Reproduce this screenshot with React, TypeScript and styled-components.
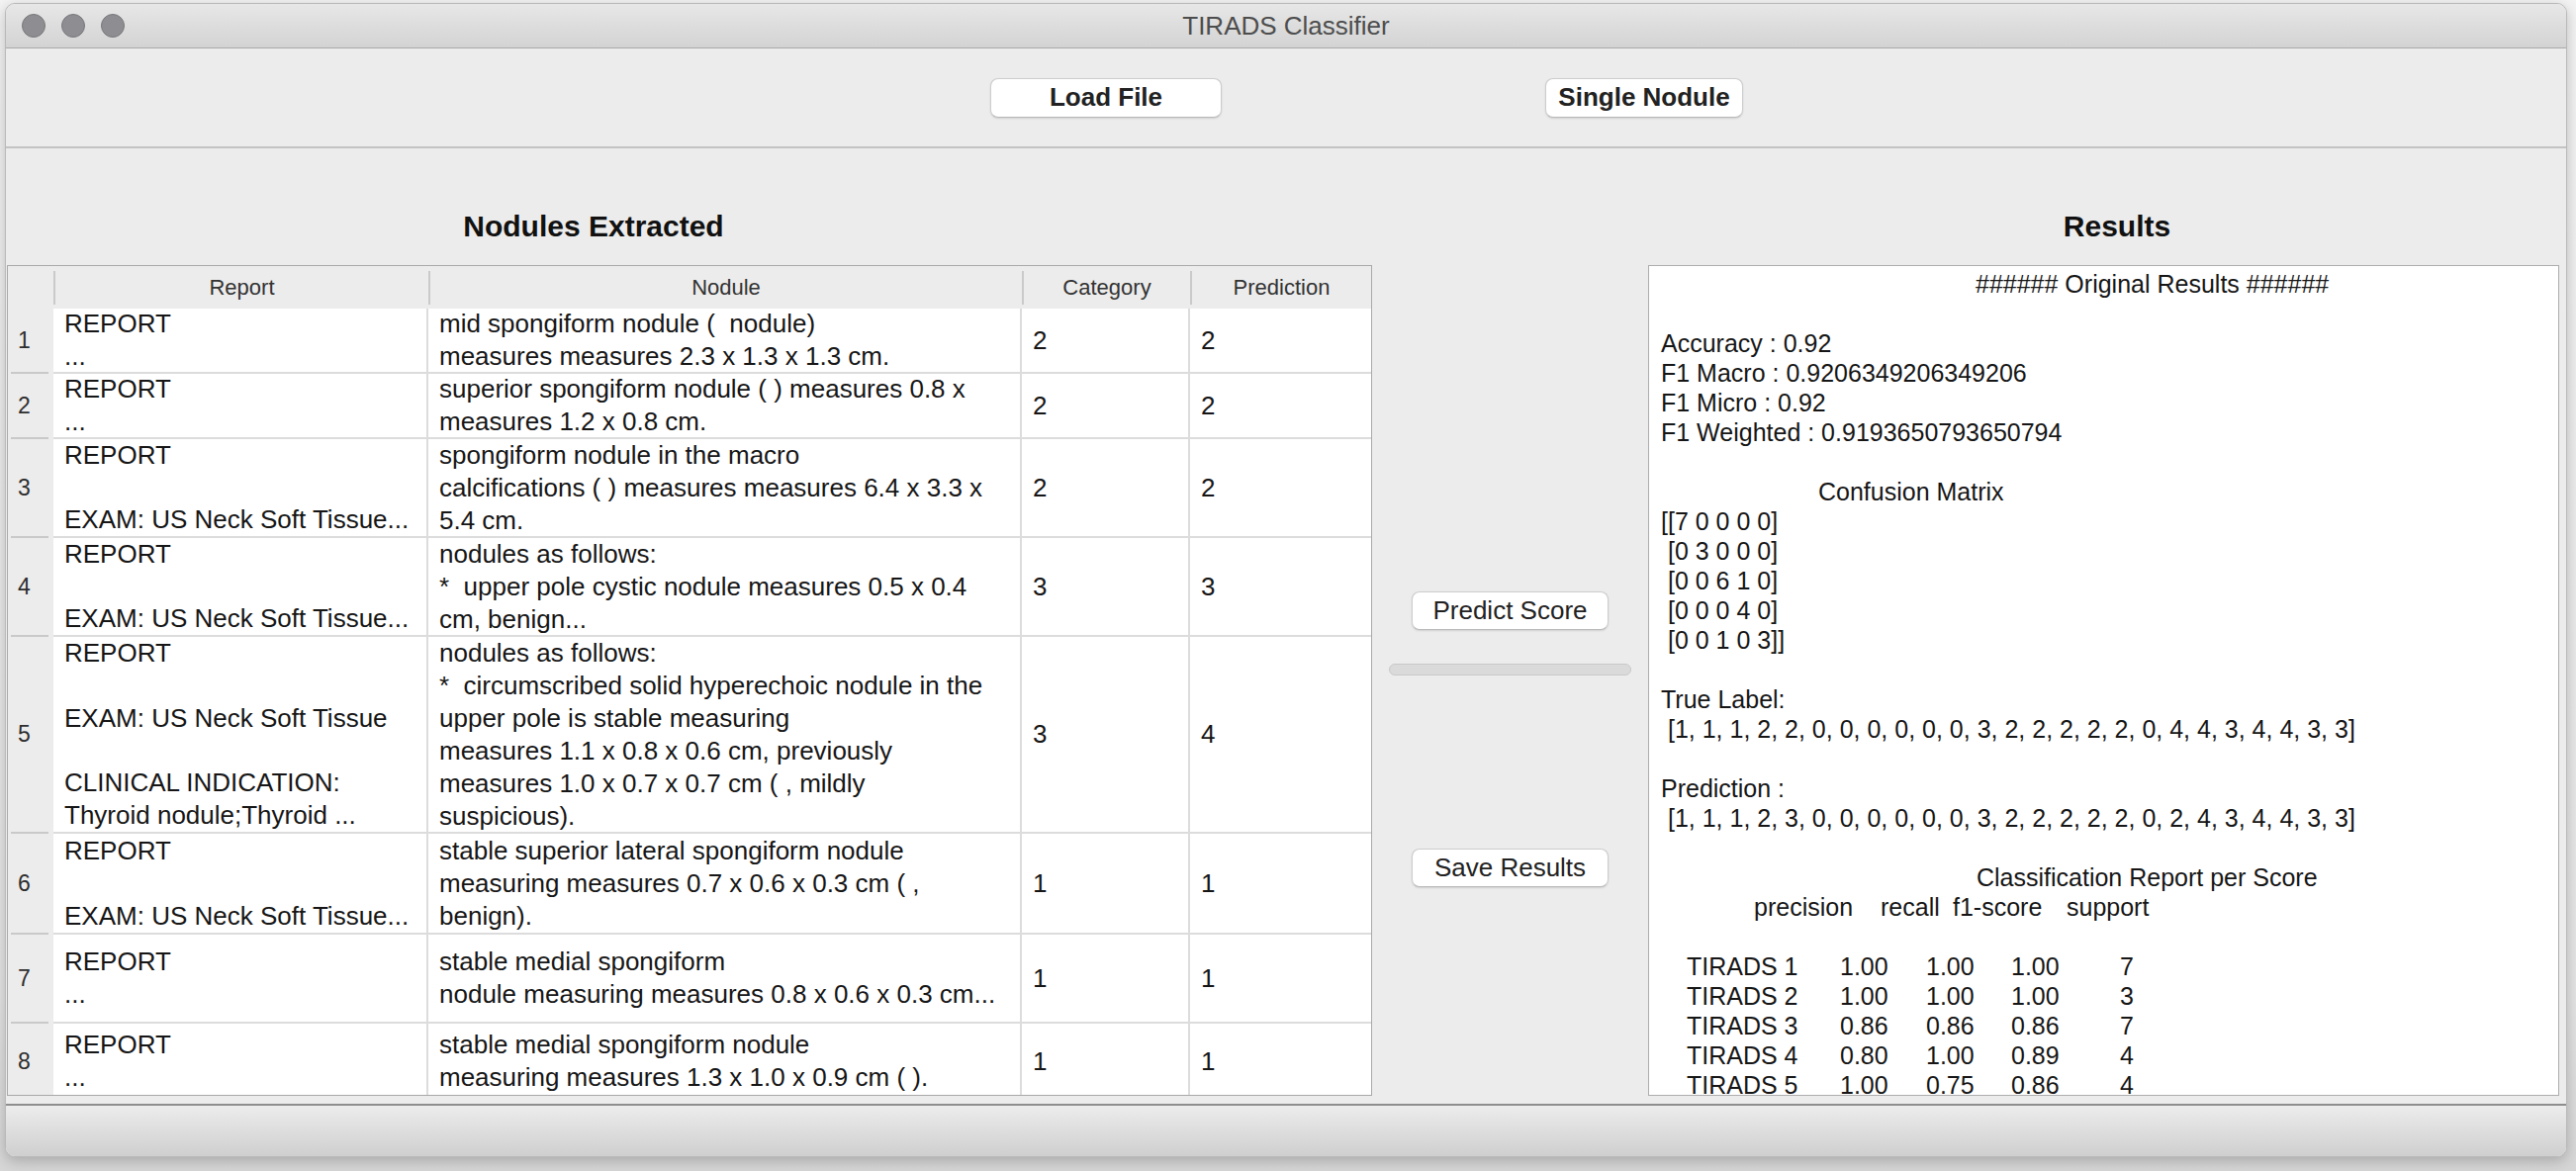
import styled, { createGlobalStyle } from "styled-components";

interface Nodulo {
  report: string[];
  nodule: string[];
  category: number;
  prediction: number;
  height: number;
}

const nodulos: Nodulo[] = [
  {
    report: ["REPORT", "..."],
    nodule: ["mid spongiform nodule (  nodule)", "measures measures 2.3 x 1.3 x 1.3 cm."],
    category: 2,
    prediction: 2,
    height: 66,
  },
  {
    report: ["REPORT", "..."],
    nodule: ["superior spongiform nodule ( ) measures 0.8 x", "measures 1.2 x 0.8 cm."],
    category: 2,
    prediction: 2,
    height: 66,
  },
  {
    report: ["REPORT", "", "EXAM: US Neck Soft Tissue..."],
    nodule: [
      "spongiform nodule in the macro",
      "calcifications ( ) measures measures 6.4 x 3.3 x",
      "5.4 cm.",
    ],
    category: 2,
    prediction: 2,
    height: 100,
  },
  {
    report: ["REPORT", "", "EXAM: US Neck Soft Tissue..."],
    nodule: [
      "nodules as follows:",
      "*  upper pole cystic nodule measures 0.5 x 0.4",
      "cm, benign...",
    ],
    category: 3,
    prediction: 3,
    height: 100,
  },
  {
    report: [
      "REPORT",
      "",
      "EXAM: US Neck Soft Tissue",
      "",
      "CLINICAL INDICATION:",
      "Thyroid nodule;Thyroid ...",
    ],
    nodule: [
      "nodules as follows:",
      "*  circumscribed solid hyperechoic nodule in the",
      "upper pole is stable measuring",
      "measures 1.1 x 0.8 x 0.6 cm, previously",
      "measures 1.0 x 0.7 x 0.7 cm ( , mildly",
      "suspicious).",
    ],
    category: 3,
    prediction: 4,
    height: 199,
  },
  {
    report: ["REPORT", "", "EXAM: US Neck Soft Tissue..."],
    nodule: [
      "stable superior lateral spongiform nodule",
      "measuring measures 0.7 x 0.6 x 0.3 cm ( ,",
      "benign).",
    ],
    category: 1,
    prediction: 1,
    height: 102,
  },
  {
    report: ["REPORT", "..."],
    nodule: ["stable medial spongiform", "nodule measuring measures 0.8 x 0.6 x 0.3 cm..."],
    category: 1,
    prediction: 1,
    height: 90,
  },
  {
    report: ["REPORT", "..."],
    nodule: ["stable medial spongiform nodule", "measuring measures 1.3 x 1.0 x 0.9 cm ( )."],
    category: 1,
    prediction: 1,
    height: 78,
  },
];

const matriz = ["[[7 0 0 0 0]", " [0 3 0 0 0]", " [0 0 6 1 0]", " [0 0 0 4 0]", " [0 0 1 0 3]]"];

const relatorio = [
  ["TIRADS 1", "1.00", "1.00", "1.00", "7"],
  ["TIRADS 2", "1.00", "1.00", "1.00", "3"],
  ["TIRADS 3", "0.86", "0.86", "0.86", "7"],
  ["TIRADS 4", "0.80", "1.00", "0.89", "4"],
  ["TIRADS 5", "1.00", "0.75", "0.86", "4"],
];

const COLUNAS = "46px 379px 600px 170px 183px";

const GlobalStyle = createGlobalStyle`
  html, body {
    margin: 0;
    padding: 0;
  }
  body {
    font-family: "Liberation Sans", Arial, Helvetica, sans-serif;
    color: #1b1b1b;
  }
  * {
    box-sizing: border-box;
  }
`;

const Desktop = styled.div`
  width: 2604px;
  height: 1184px;
  padding: 3px 0 0 5px;
  background: linear-gradient(#f3f3f3, #e4e4e4 85%, #d6d6d6);
  overflow: hidden;
`;

const Janela = styled.div`
  width: 2590px;
  height: 1167px;
  border: 1px solid #b9b9b9;
  border-radius: 10px;
  overflow: hidden;
  display: flex;
  flex-direction: column;
  background: #ececec;
  box-shadow: 0 4px 14px rgba(0, 0, 0, 0.22);
`;

const BarraTitulo = styled.div`
  flex: none;
  height: 45px;
  display: grid;
  grid-template-columns: 1fr auto 1fr;
  align-items: center;
  background: linear-gradient(#e7e7e7, #d3d3d3);
  border-bottom: 1px solid #a9a9a9;
`;

const Semaforo = styled.div`
  display: flex;
  gap: 16px;
  padding-left: 16px;
`;

const Luz = styled.span`
  width: 24px;
  height: 24px;
  border-radius: 50%;
  background: #8e8e92;
  border: 1px solid #78787c;
`;

const Titulo = styled.div`
  font-size: 26px;
  color: #4d4d4d;
`;

const BarraFerramentas = styled.div`
  flex: none;
  height: 101px;
  display: flex;
  align-items: center;
  gap: 327px;
  padding-left: 995px;
  border-bottom: 2px solid #c3c3c3;
`;

const BotaoMac = styled.button<{ $w: number; $bold?: boolean }>`
  width: ${(p) => p.$w}px;
  height: ${(p) => (p.$bold ? 40 : 39)}px;
  padding: 0;
  background: #ffffff;
  border: 1px solid #cdcdcd;
  border-bottom-color: #b9b9b9;
  border-radius: 8px;
  box-shadow: 0 1px 2px rgba(0, 0, 0, 0.12);
  font-family: "Liberation Sans", Arial, sans-serif;
  font-size: 26px;
  font-weight: ${(p) => (p.$bold ? 700 : 400)};
  color: #222222;
`;

const Conteudo = styled.div`
  flex: 1;
  display: grid;
  grid-template-columns: 1380px 279px 921px;
  padding: 0 7px 8px 1px;
  min-height: 0;
`;

const Painel = styled.section`
  display: flex;
  flex-direction: column;
  min-height: 0;
`;

const Cabecalho = styled.h2<{ $shift: number }>`
  flex: none;
  height: 118px;
  margin: 0;
  padding-top: 61px;
  text-align: center;
  font-size: 30px;
  line-height: 36px;
  font-weight: 700;
  color: #111111;
  padding-left: ${(p) => (p.$shift > 0 ? p.$shift : 0)}px;
  padding-right: ${(p) => (p.$shift < 0 ? -p.$shift : 0)}px;
`;

const Tabela = styled.div`
  flex: 1;
  min-height: 0;
  border: 1px solid #a9a9a9;
  background: #ffffff;
  overflow: hidden;
`;

const LinhaCabecalho = styled.div`
  display: grid;
  grid-template-columns: ${COLUNAS};
  height: 43px;
  align-items: center;
  background: #ececec;
`;

const CelulaCabecalho = styled.div<{ $sep?: boolean }>`
  height: 34px;
  display: flex;
  align-items: center;
  justify-content: center;
  font-size: 22px;
  color: #333333;
  border-left: ${(p) => (p.$sep ? "2px solid #cacaca" : "none")};
`;

const Linha = styled.div<{ $h: number }>`
  display: grid;
  grid-template-columns: ${COLUNAS};
  height: ${(p) => p.$h}px;
  flex: none;
`;

const CabecalhoLinha = styled.div`
  display: flex;
  flex-direction: column;
  background: #ececec;
`;

const NumeroLinha = styled.div`
  flex: 1;
  display: flex;
  align-items: center;
  padding-left: 10px;
  font-size: 23px;
  color: #2e2e2e;
`;

const RegraLinha = styled.div`
  height: 2px;
  margin: 0 5px 0 3px;
  background: #c9c9c9;
`;

const Celula = styled.div<{ $last?: boolean }>`
  display: flex;
  flex-direction: column;
  justify-content: center;
  padding: 0 8px 0 11px;
  font-size: 26px;
  line-height: 33px;
  color: #161616;
  overflow: hidden;
  border-bottom: 2px solid #dcdcdc;
  border-right: ${(p) => (p.$last ? "none" : "2px solid #dcdcdc")};
`;

const TextoLinha = styled.div`
  white-space: pre;
  height: 33px;
`;

const Meio = styled.div`
  display: flex;
  flex-direction: column;
  align-items: center;
  padding-top: 448px;
`;

const Progresso = styled.div`
  width: 245px;
  height: 12px;
  margin-top: 34px;
  border-radius: 6px;
  background: #dadada;
  border: 1px solid #c9c9c9;
`;

const Espaco = styled.div<{ $h: number }>`
  height: ${(p) => p.$h}px;
  flex: none;
`;

const CaixaResultados = styled.div`
  flex: 1;
  min-height: 0;
  border: 1px solid #adadad;
  background: #ffffff;
  padding: 3px 12px 0 12px;
  font-size: 25px;
  line-height: 30px;
  color: #161616;
  overflow: hidden;
`;

const LinhaTexto = styled.div<{ $indent?: number }>`
  height: 30px;
  white-space: pre;
  padding-left: ${(p) => p.$indent ?? 0}px;
`;

const GradeMetricas = styled.div<{ $cols: string; $indent: number }>`
  display: grid;
  grid-template-columns: ${(p) => p.$cols};
  height: 30px;
  padding-left: ${(p) => p.$indent}px;
  white-space: pre;
`;

const BarraStatus = styled.div`
  flex: none;
  height: 53px;
  border-top: 2px solid #8e8e8e;
  background: linear-gradient(#ececec, #cfcfcf);
`;

const App = () => {
  return (
    <>
      <GlobalStyle />
      <Desktop>
        <Janela>
          <BarraTitulo>
            <Semaforo>
              <Luz />
              <Luz />
              <Luz />
            </Semaforo>
            <Titulo>TIRADS Classifier</Titulo>
            <div />
          </BarraTitulo>

          <BarraFerramentas>
            <BotaoMac $w={234} $bold>
              Load File
            </BotaoMac>
            <BotaoMac $w={200} $bold>
              Single Nodule
            </BotaoMac>
          </BarraFerramentas>

          <Conteudo>
            <Painel>
              <Cabecalho $shift={-194}>Nodules Extracted</Cabecalho>
              <Tabela>
                <LinhaCabecalho>
                  <CelulaCabecalho />
                  <CelulaCabecalho $sep>Report</CelulaCabecalho>
                  <CelulaCabecalho $sep>Nodule</CelulaCabecalho>
                  <CelulaCabecalho $sep>Category</CelulaCabecalho>
                  <CelulaCabecalho $sep>Prediction</CelulaCabecalho>
                </LinhaCabecalho>
                {nodulos.map((n, i) => (
                  <Linha key={i} $h={n.height}>
                    <CabecalhoLinha>
                      <NumeroLinha>{i + 1}</NumeroLinha>
                      <RegraLinha />
                    </CabecalhoLinha>
                    <Celula>
                      {n.report.map((t, j) => (
                        <TextoLinha key={j}>{t}</TextoLinha>
                      ))}
                    </Celula>
                    <Celula>
                      {n.nodule.map((t, j) => (
                        <TextoLinha key={j}>{t}</TextoLinha>
                      ))}
                    </Celula>
                    <Celula>
                      <TextoLinha>{n.category}</TextoLinha>
                    </Celula>
                    <Celula $last>
                      <TextoLinha>{n.prediction}</TextoLinha>
                    </Celula>
                  </Linha>
                ))}
              </Tabela>
            </Painel>

            <Meio>
              <BotaoMac $w={199}>Predict Score</BotaoMac>
              <Progresso />
              <Espaco $h={175} />
              <BotaoMac $w={199}>Save Results</BotaoMac>
            </Meio>

            <Painel>
              <Cabecalho $shift={27}>Results</Cabecalho>
              <CaixaResultados>
                <LinhaTexto $indent={318}>###### Original Results ######</LinhaTexto>
                <LinhaTexto />
                <LinhaTexto>Accuracy : 0.92</LinhaTexto>
                <LinhaTexto>F1 Macro : 0.9206349206349206</LinhaTexto>
                <LinhaTexto>F1 Micro : 0.92</LinhaTexto>
                <LinhaTexto>F1 Weighted : 0.9193650793650794</LinhaTexto>
                <LinhaTexto />
                <LinhaTexto $indent={159}>Confusion Matrix</LinhaTexto>
                {matriz.map((m, i) => (
                  <LinhaTexto key={i}>{m}</LinhaTexto>
                ))}
                <LinhaTexto />
                <LinhaTexto>True Label:</LinhaTexto>
                <LinhaTexto>{" [1, 1, 1, 2, 2, 0, 0, 0, 0, 0, 0, 3, 2, 2, 2, 2, 2, 0, 4, 4, 3, 4, 4, 3, 3]"}</LinhaTexto>
                <LinhaTexto />
                <LinhaTexto>Prediction :</LinhaTexto>
                <LinhaTexto>{" [1, 1, 1, 2, 3, 0, 0, 0, 0, 0, 0, 3, 2, 2, 2, 2, 2, 0, 2, 4, 3, 4, 4, 3, 3]"}</LinhaTexto>
                <LinhaTexto />
                <LinhaTexto $indent={319}>Classification Report per Score</LinhaTexto>
                <GradeMetricas $cols="128px 73px 115px auto" $indent={94}>
                  <span>precision</span>
                  <span>recall</span>
                  <span>f1-score</span>
                  <span>support</span>
                </GradeMetricas>
                <LinhaTexto />
                {relatorio.map((r, i) => (
                  <GradeMetricas key={i} $cols="155px 87px 86px 110px auto" $indent={26}>
                    {r.map((c, j) => (
                      <span key={j}>{c}</span>
                    ))}
                  </GradeMetricas>
                ))}
              </CaixaResultados>
            </Painel>
          </Conteudo>

          <BarraStatus />
        </Janela>
      </Desktop>
    </>
  );
};

export default App;
